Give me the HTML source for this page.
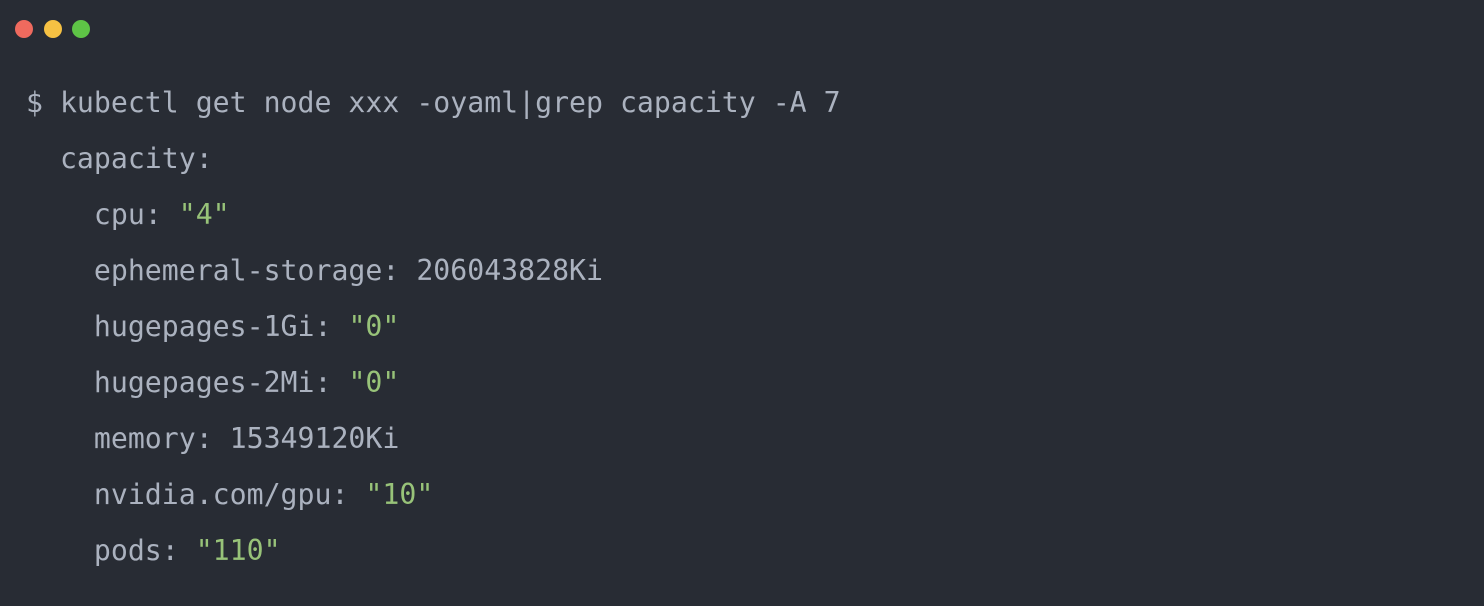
<!DOCTYPE html>
<html><head><style>
html,body{margin:0;padding:0;width:1484px;height:606px;background:#282c34;overflow:hidden}
.d{position:absolute;top:20px;width:18px;height:18px;border-radius:50%}
pre{position:absolute;left:26px;top:75px;margin:0;font-family:"DejaVu Sans Mono","Liberation Mono",monospace;font-size:28.2px;line-height:56px;color:#abb2bf}
.s{color:#98c379}
</style></head><body>
<div class="d" style="left:15px;background:#ef6a5e"></div>
<div class="d" style="left:44px;background:#f6c143"></div>
<div class="d" style="left:72px;background:#5ec446"></div>
<pre>$ kubectl get node xxx -oyaml|grep capacity -A 7
  capacity:
    cpu: <span class="s">"4"</span>
    ephemeral-storage: 206043828Ki
    hugepages-1Gi: <span class="s">"0"</span>
    hugepages-2Mi: <span class="s">"0"</span>
    memory: 15349120Ki
    nvidia.com/gpu: <span class="s">"10"</span>
    pods: <span class="s">"110"</span></pre>
</body></html>
